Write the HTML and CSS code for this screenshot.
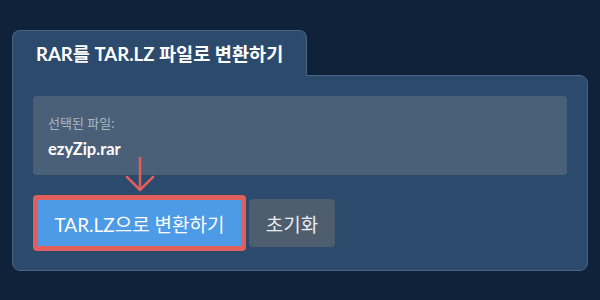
FILE: index.html
```html
<!DOCTYPE html>
<html>
<head>
	<title>RAR to TAR.LZ</title>
	<link rel="stylesheet" href="styles.css">
</head>
<body>
	<div class="wrap">
		<div class="tab">RAR를 TAR.LZ 파일로 변환하기</div>
		<div class="panel">
			<div class="filebox">
				<div class="label">선택된 파일:</div>
				<div class="filename">ezyZip.rar</div>
			</div>
			<div class="actions">
				<div class="highlight">
					<button class="convert">TAR.LZ으로 변환하기</button>
					<!-- pointer arrow -->
					<svg class="arrow" width="30" height="36" viewBox="0 0 30 36">
						<path d="M15 0 V33 M2 20 L15 33 L28 20" fill="none" stroke="#e05e5b" stroke-width="2.5" stroke-linecap="round" stroke-linejoin="round"/>
					</svg>
				</div>
				<button class="reset">초기화</button>
			</div>
		</div>
	</div>
</body>
</html>
```
FILE: styles.css
```css
body {
	margin: 0;
	background-color: #10223a;
	font-family: Lato, "Noto Sans CJK KR", sans-serif;
	color: #fff;
}
.wrap {
	padding: 30px 12px 0 12px;
}
.tab {
	position: relative;
	z-index: 1;
	display: inline-block;
	height: 45px;
	line-height: 46px;
	padding: 0 23px;
	font-size: 18.6px;
	font-weight: bold;
	background-color: #2c4a6b;
	border: 1px solid #4b6382;
	border-bottom: none;
	border-radius: 8px 8px 0 0;
	margin-bottom: -1px;
}
.panel {
	background-color: #2c4a6b;
	border: 1px solid #4b6382;
	border-radius: 0 8px 8px 8px;
	padding: 20px 20px 20px 20px;
	height: 154px;
}
.filebox {
	background-color: #4a6079;
	border-radius: 4px;
	padding: 17px 15px 15px 15px;
}
.label {
	font-size: 13px;
	line-height: 20px;
	color: #aab5c2;
}
.filename {
	margin-top: 5px;
	font-size: 16.5px;
	font-weight: bold;
	line-height: 22px;
}
.actions {
	display: flex;
	align-items: center;
	margin-top: 20px;
}
.highlight {
	position: relative;
	border: 5px solid #e05e5b;
	border-radius: 4px;
	background-color: #4d9ae6;
}
.arrow {
	position: absolute;
	left: 87px;
	top: -43px;
}
button {
	font-family: Lato, "Noto Sans CJK KR", sans-serif;
	font-size: 19px;
	color: #fff;
	border: none;
	cursor: pointer;
	height: 46px;
	padding: 0 16px;
}
.convert {
	display: block;
	width: 203px;
	background-color: #4d9ae6;
}
.reset {
	margin-left: 3px;
	height: 48px;
	width: 86px;
	background-color: #4e5e6e;
	border-radius: 4px;
	color: #e8ebee;
}
```
